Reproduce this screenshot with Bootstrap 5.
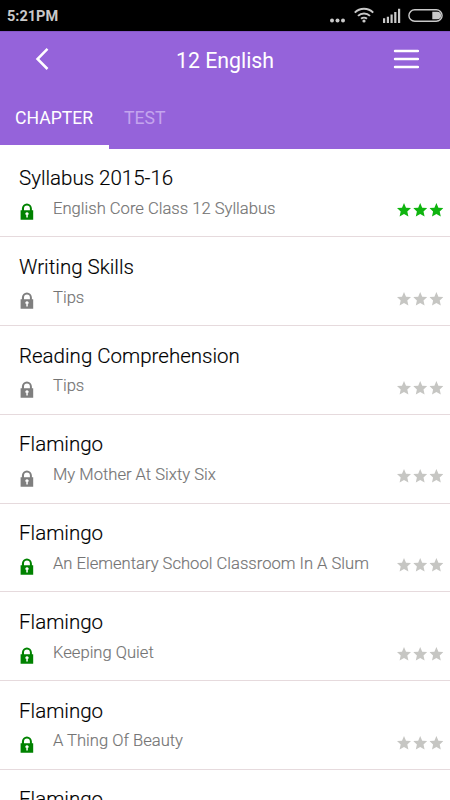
<!DOCTYPE html>
<html lang="en">
<head>
<meta charset="utf-8">
<meta name="viewport" content="width=device-width, initial-scale=1">
<title>12 English</title>
<link rel="stylesheet" href="https://cdn.jsdelivr.net/npm/bootstrap@5.3.0/dist/css/bootstrap.min.css">
<style>
body{font-family:Roboto,"Liberation Sans",sans-serif;background:#fff}
.screen{height:800px}
svg{display:block;flex:none}
.status{height:31px;background:#000;color:#c9c9c9;font-size:14.5px;font-weight:700;padding:0 7px}
.status span{padding-top:2px}
.appbar{background:#9563da;color:#fff;height:117.7px;border-top:1px solid #8657c9}
.topline{height:56px;padding:0 31px 0 35px}
.apptitle{font-size:21.3px;line-height:55px;padding:0 0 0 6px}
.topline svg{margin-bottom:2px}
.tabs .nav-link{color:#fff;font-size:17.6px;line-height:24px;padding:18px 15px 14px;border-bottom:4px solid transparent;height:61px}
.tabs .nav-link.active{border-bottom-color:#fff;width:109px}
.tabs .nav-link.faded{color:#c4a5ee}
.chapter{height:88.75px;border:0;border-bottom:1.4px solid #e6dadd;border-radius:0;padding:16.4px 6px 0 19px;color:#111;background:#fff;flex:none}
.chapter-name{font-size:20.5px;font-weight:300;line-height:26px;color:#000;-webkit-text-stroke:.15px #000}
.detail{padding-left:1px}
.topic{font-size:16.6px;font-weight:300;line-height:22px;color:#747474;-webkit-text-stroke:.15px #747474;margin-left:19px;margin-top:6.9px}
.lock{fill:#7f7f7f;margin-top:12.4px}
.lock.open{fill:#008200}
.stars{fill:#c6c6c3;margin-top:12px}
.stars.full{fill:#0fb40f}
</style>
<script src="https://cdn.jsdelivr.net/npm/bootstrap@5.3.0/dist/js/bootstrap.bundle.min.js"></script>
</head>
<body>
<svg width="0" height="0" class="position-absolute">
  <symbol id="lock" viewBox="0 0 14 17"><path fill-rule="evenodd" d="M.6 7.200h1.300V5.600a5 5.200 0 0 1 10 0v1.600h1.300v9.600H.6zM4 7.200h5.900V5.600a2.950 3.200 0 0 0-5.900 0zM7 9.200a1.700 1.700 0 0 0-1.400 2.600h.7v2.800h1.500v-2.800h.6A1.700 1.700 0 0 0 7 9.200z"/></symbol>
  <symbol id="star" viewBox="0 0 14 14"><path d="M7 0l2 4.700 5 .4-3.700 3.400 1.100 5L7 10.900l-4.400 2.600 1.100-5L0 5.100l5-.4z"/></symbol>
  <symbol id="stars" viewBox="0 0 47 14"><use href="#star" x="0" width="14" height="14"/><use href="#star" x="16.200" width="14" height="14"/><use href="#star" x="32.400" width="14" height="14"/></symbol>
</svg>

<div class="screen d-flex flex-column overflow-hidden">
<div class="status flex-shrink-0 d-flex align-items-center justify-content-between">
  <span>5:21PM</span>
  <svg width="114" height="31" viewBox="329 0 114 31" fill="#c9c9c9">
    <circle cx="332" cy="20.600" r="2"/><circle cx="337.500" cy="20.600" r="2"/><circle cx="343" cy="20.600" r="2"/>
    <g fill="none" stroke="#c9c9c9" stroke-width="2"><path d="M354.800 12.600a13 13 0 0 1 18.400 0M358 15.900a8.500 8.500 0 0 1 12 0M361.100 18.800a4.200 4.200 0 0 1 5.800 0"/></g>
    <circle cx="364" cy="21" r="1.600"/>
    <path d="M383 18.200h2.200v4.800H383zM386.800 16.800h2.200v6.200h-2.200zM390.500 14.500h2.200v8.500h-2.200zM394.200 12h2.200v11h-2.200zM398 8.800h2.200v14.200H398z"/>
    <rect x="408.900" y="9.700" width="33.200" height="11.600" rx="5.800" fill="none" stroke="#c9c9c9" stroke-width="1.400"/>
    <path d="M432.300 11.700h5a3.800 3.800 0 0 1 0 7.600h-5z"/>
  </svg>
</div>

<header class="appbar flex-shrink-0">
  <div class="topline d-flex align-items-center justify-content-between">
    <svg width="16" height="24" fill="none" stroke="#fff" stroke-width="2.500"><path d="M12.500 1.900L2.500 12l10 10"/></svg>
    <h1 class="apptitle fw-normal mb-0">12 English</h1>
    <svg width="26" height="24" stroke="#fff" stroke-width="2.400" stroke-linecap="round"><path d="M2 4h23M2 12h23M2 20h23"/></svg>
  </div>
  <nav class="tabs nav">
    <a class="nav-link active" href="#">CHAPTER</a>
    <a class="nav-link faded" href="#">TEST</a>
  </nav>
</header>

<main class="list-group list-group-flush flex-fill overflow-hidden" id="chapters"></main>
</div>

<script>
const chapters = [
  ["Syllabus 2015-16", "English Core Class 12 Syllabus", true, true],
  ["Writing Skills", "Tips", false, false],
  ["Reading Comprehension", "Tips", false, false],
  ["Flamingo", "My Mother At Sixty Six", false, false],
  ["Flamingo", "An Elementary School Classroom In A Slum", true, false],
  ["Flamingo", "Keeping Quiet", true, false],
  ["Flamingo", "A Thing Of Beauty", true, false],
  ["Flamingo", "", false, false]
];
document.getElementById("chapters").innerHTML = chapters.map(([name, topic, open, full]) => `
  <a href="#" class="chapter list-group-item">
    <div class="chapter-name">${name}</div>
    <div class="detail d-flex align-items-start">
      <svg class="lock ${open ? "open" : ""}" width="14" height="17"><use href="#lock"/></svg>
      <span class="topic">${topic}</span>
      <svg class="stars ms-auto ${full ? "full" : ""}" width="47" height="14"><use href="#stars"/></svg>
    </div>
  </a>`).join("");
</script>
</body>
</html>
